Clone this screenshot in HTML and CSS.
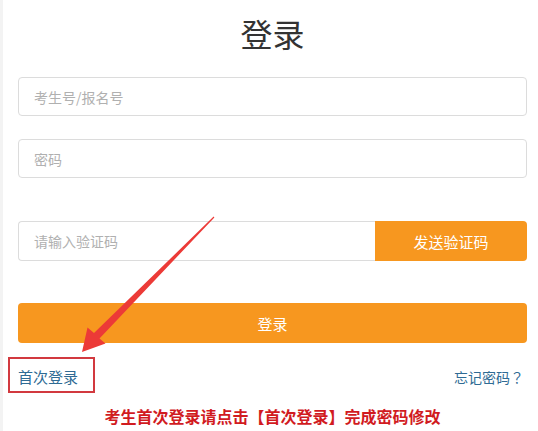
FILE: index.html
```html
<!DOCTYPE html>
<html lang="zh-CN">
<head>
<meta charset="utf-8">
<title>登录</title>
<link rel="stylesheet" href="styles.css">
</head>
<body>
<div class="page">
  <h1 class="title">登录</h1>
  <form class="form">
    <input class="field" type="text" placeholder="考生号/报名号">
    <input class="field field-pwd" type="password" placeholder="密码">
    <div class="captcha">
      <input class="field field-code" type="text" placeholder="请输入验证码">
      <button class="btn-send" type="button">发送验证码</button>
    </div>
    <button class="btn-login" type="button">登录</button>
  </form>
  <div class="links">
    <a class="link first-login" href="#">首次登录</a>
    <a class="link forgot" href="#">忘记密码<span class="qmark" lang="zh-TW">？</span></a>
  </div>
  <p class="notice">考生首次登录请点击【首次登录】完成密码修改</p>
  <svg class="arrow" width="538" height="431" viewBox="0 0 538 431" aria-hidden="true">
    <polygon points="213.6,216.6 94,333 87.5,327.5 82,352 105.5,343.5 99.5,338.5 214.4,217.4" fill="#ec3a37"/>
  </svg>
</div>
</body>
</html>
```

FILE: styles.css
```css
html, body {
  margin: 0;
  padding: 0;
}

body {
  background: #f3f3f3;
  font-family: "Noto Sans CJK SC", "Noto Sans", "Liberation Sans", sans-serif;
}

.page {
  position: relative;
  margin-left: 3px;
  min-height: 431px;
  box-sizing: border-box;
  background: #fff;
  padding: 13px 11px 0 15px;
}

.title {
  margin: 0;
  font-size: 32px;
  line-height: 40px;
  font-weight: normal;
  color: #333;
  text-align: center;
}

.form {
  margin-top: 24px;
  display: flex;
  flex-direction: column;
}

.field {
  box-sizing: border-box;
  height: 39px;
  width: 100%;
  margin: 0;
  border: 1px solid #dcdcdc;
  border-radius: 4px;
  padding: 0 15px;
  font-family: inherit;
  font-size: 14px;
  color: #555;
  background: #fff;
  outline: none;
}

.field::placeholder {
  color: #b0b0b0;
}

.field-pwd {
  margin-top: 23px;
}

.captcha {
  margin-top: 43px;
  display: flex;
  height: 40px;
}

.field-code {
  flex: 1;
  height: 40px;
  border-radius: 4px 0 0 4px;
  border-right: none;
}

.btn-send {
  width: 152px;
  height: 40px;
  margin: 0;
  border: none;
  border-radius: 0 4px 4px 0;
  background: #f7971f;
  color: #fff;
  font-family: inherit;
  font-size: 15px;
  padding: 0;
}

.btn-login {
  margin-top: 42px;
  height: 40px;
  border: none;
  border-radius: 4px;
  background: #f7971f;
  color: #fff;
  font-family: inherit;
  font-size: 15px;
  padding: 0;
}

.links {
  margin-top: 24px;
  display: flex;
  justify-content: space-between;
  align-items: center;
  height: 20px;
}

.link {
  color: #2f6b94;
  text-decoration: none;
  line-height: 20px;
}

.first-login {
  position: relative;
  font-size: 15px;
}

.first-login::after {
  content: "";
  position: absolute;
  left: -10px;
  right: -17px;
  top: -10px;
  bottom: -6px;
  border: 2px solid #d2393f;
}

.forgot {
  font-size: 14px;
  margin-right: 3px;
}

.qmark {
  font-family: "Noto Sans CJK TC", "Noto Sans CJK SC", sans-serif;
}

.notice {
  margin: 18px 0 0;
  text-align: center;
  font-size: 16px;
  line-height: 22px;
  font-weight: bold;
  color: #d11b1f;
}

.arrow {
  position: absolute;
  left: -3px;
  top: 0;
  pointer-events: none;
}
```
